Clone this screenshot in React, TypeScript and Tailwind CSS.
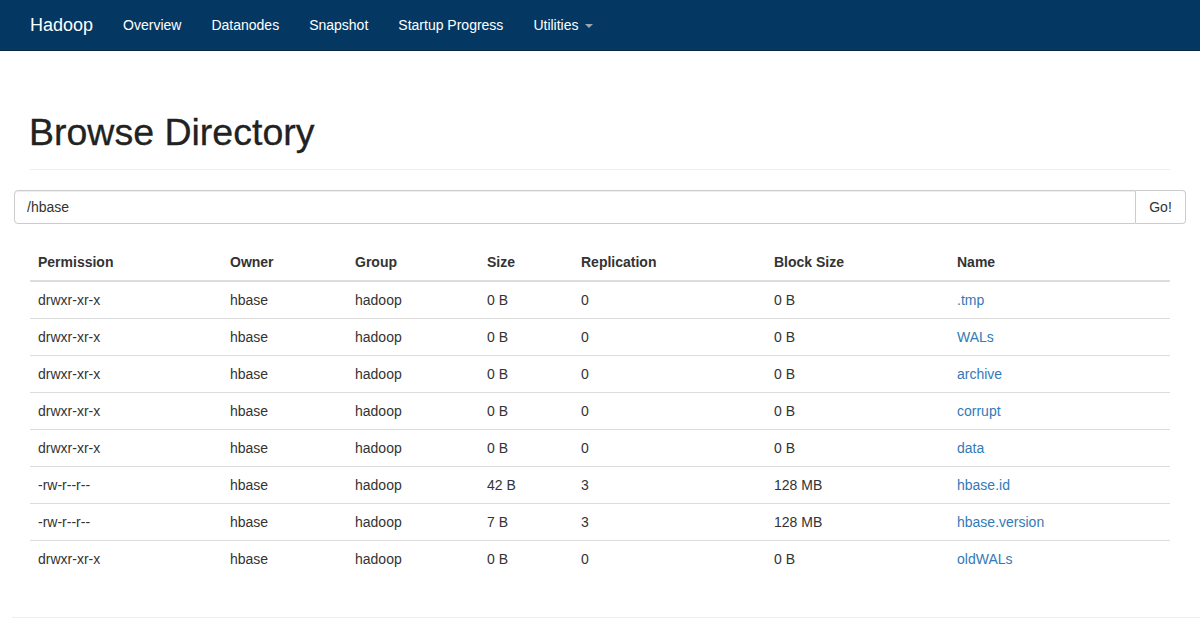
import React from "react";

type Entry = {
  permission: string;
  owner: string;
  group: string;
  size: string;
  replication: string;
  blockSize: string;
  name: string;
};

const entries: Entry[] = [
  { permission: "drwxr-xr-x", owner: "hbase", group: "hadoop", size: "0 B", replication: "0", blockSize: "0 B", name: ".tmp" },
  { permission: "drwxr-xr-x", owner: "hbase", group: "hadoop", size: "0 B", replication: "0", blockSize: "0 B", name: "WALs" },
  { permission: "drwxr-xr-x", owner: "hbase", group: "hadoop", size: "0 B", replication: "0", blockSize: "0 B", name: "archive" },
  { permission: "drwxr-xr-x", owner: "hbase", group: "hadoop", size: "0 B", replication: "0", blockSize: "0 B", name: "corrupt" },
  { permission: "drwxr-xr-x", owner: "hbase", group: "hadoop", size: "0 B", replication: "0", blockSize: "0 B", name: "data" },
  { permission: "-rw-r--r--", owner: "hbase", group: "hadoop", size: "42 B", replication: "3", blockSize: "128 MB", name: "hbase.id" },
  { permission: "-rw-r--r--", owner: "hbase", group: "hadoop", size: "7 B", replication: "3", blockSize: "128 MB", name: "hbase.version" },
  { permission: "drwxr-xr-x", owner: "hbase", group: "hadoop", size: "0 B", replication: "0", blockSize: "0 B", name: "oldWALs" },
];

const navLinks = ["Overview", "Datanodes", "Snapshot", "Startup Progress"];

export default function App() {
  return (
    <div className="min-h-[634px] bg-white text-[14px] leading-5 text-[#333] font-['Liberation_Sans',Arial,sans-serif]">
      {/* Navbar */}
      <nav className="h-[51px] bg-[#043862] border-b border-[#08263f]">
        <div className="flex h-[50px] items-center px-[30px]">
          <span className="text-[18px] text-white mr-[30px]">Hadoop</span>
          <div className="flex items-center">
            {navLinks.map((l) => (
              <a key={l} href="#" className="text-white mr-[30px]">
                {l}
              </a>
            ))}
            <a href="#" className="flex items-center text-white">
              Utilities
              <span className="ml-[6px] mt-[2px] border-x-4 border-t-4 border-x-transparent border-t-[#9aa7b3]" />
            </a>
          </div>
        </div>
      </nav>

      {/* Page header */}
      <div className="px-[30px]">
        <div className="pt-[61px] pb-[17px] border-b border-[#eee]">
          <h1 className="text-[37.5px] leading-[40px] text-[#222] ml-[-1px] [-webkit-text-stroke:0.3px_#222]">
            Browse Directory
          </h1>
        </div>
      </div>

      {/* Path input */}
      <div className="px-[14px] mt-[20px]">
        <div className="flex h-[34px]">
          <input
            defaultValue="/hbase"
            className="flex-1 h-[34px] px-3 border border-[#ccc] rounded-l-[4px] shadow-[inset_0_1px_1px_rgba(0,0,0,0.075)] text-[14px] text-[#333] outline-none"
          />
          <button className="h-[34px] w-[50px] border border-l-0 border-[#ccc] rounded-r-[4px] bg-white text-[14px] text-[#333]">
            Go!
          </button>
        </div>
      </div>

      {/* Listing */}
      <div className="px-[30px] mt-[20px]">
        <table className="w-full border-collapse text-left table-fixed">
          <colgroup>
            <col className="w-[192px]" />
            <col className="w-[125px]" />
            <col className="w-[132px]" />
            <col className="w-[94px]" />
            <col className="w-[193px]" />
            <col className="w-[183px]" />
            <col />
          </colgroup>
          <thead>
            <tr className="border-b-2 border-[#ddd]">
              {["Permission", "Owner", "Group", "Size", "Replication", "Block Size", "Name"].map((h) => (
                <th key={h} className="p-2 font-bold">
                  {h}
                </th>
              ))}
            </tr>
          </thead>
          <tbody>
            {entries.map((e, i) => (
              <tr key={e.name} className={i === 0 ? "" : "border-t border-[#ddd]"}>
                <td className="p-2">{e.permission}</td>
                <td className="p-2">{e.owner}</td>
                <td className="p-2">{e.group}</td>
                <td className="p-2">{e.size}</td>
                <td className="p-2">{e.replication}</td>
                <td className="p-2">{e.blockSize}</td>
                <td className="p-2">
                  <a href="#" className="text-[#337ab7]">
                    {e.name}
                  </a>
                </td>
              </tr>
            ))}
          </tbody>
        </table>
      </div>

      <div className="ml-[12px] mt-[40px] border-t border-[#eee]" />
    </div>
  );
}
